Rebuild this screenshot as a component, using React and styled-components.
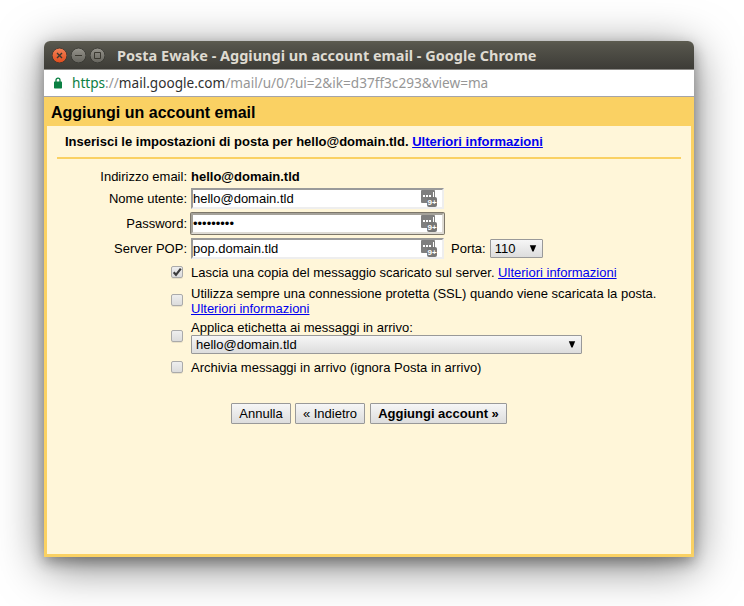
import React from "react";
import styled, { createGlobalStyle, css } from "styled-components";

const GlobalStyle = createGlobalStyle`
  * { box-sizing: border-box; }
  html, body { margin: 0; height: 100%; background: #fff; }
  body { font: 13px/15px "Liberation Sans", Arial, sans-serif; color: #000; overflow: hidden; }
`;

const Desktop = styled.main`
  width: 744px;
  height: 606px;
  padding: 41px 50px 49px 44px;
  overflow: hidden;
  background: #fff;
`;

const Window = styled.section`
  width: 650px;
  height: 516px;
  display: flex;
  flex-direction: column;
  border-radius: 6px 6px 0 0;
  box-shadow: 0 9px 46px rgba(0, 0, 0, 0.52), 0 5px 14px rgba(0, 0, 0, 0.32);
`;

const TitleBar = styled.header`
  height: 29px;
  flex: none;
  display: flex;
  align-items: center;
  padding-left: 8px;
  border-radius: 6px 6px 0 0;
  border-bottom: 1px solid #8d8c88;
  background: linear-gradient(#5d5c50 0, #55544b 4px, #3d3c37 100%);
`;

const Controls = styled.div`
  display: flex;
  gap: 4px;
  svg { display: block; width: 15px; height: 16px; }
`;

const WindowTitle = styled.h1`
  margin: 0 0 0 12px;
  font: bold 14.5px/28px "Noto Sans", sans-serif;
  color: #dfdbd2;
  white-space: nowrap;
  transform: scaleX(0.999);
  transform-origin: left;
`;

const AddressBar = styled.div`
  height: 27px;
  flex: none;
  display: flex;
  align-items: center;
  padding-left: 10px;
  background: #fff;
  border-bottom: 1px solid #a5a4a8;
  svg { display: block; flex: none; }
`;

const Url = styled.div`
  margin-left: 10px;
  padding-bottom: 2px;
  font: 15px/24px "Noto Sans", sans-serif;
  color: #969696;
  white-space: nowrap;
  transform: scaleX(0.906);
  transform-origin: left;
`;
const Scheme = styled.span`color: #0b8043;`;
const Host = styled.span`color: #303030;`;

const Page = styled.div`
  flex: 1;
  display: flex;
  flex-direction: column;
  padding: 0 3px 3px;
  background: #fad163;
`;

const PageTitle = styled.h2`
  margin: 0;
  height: 29px;
  padding: 7px 0 0 4px;
  font-size: 16px;
  line-height: 18px;
`;

const Panel = styled.div`
  flex: 1;
  padding: 8px 10px 0;
  background: #fff6d9;
`;

const Intro = styled.p`
  margin: 0;
  padding: 0 8px 8px;
  font-weight: bold;
  border-bottom: 2px solid #fad163;
`;

const Link = styled.a`
  color: #0000ee;
  text-decoration: underline;
`;

const Form = styled.form`
  padding-top: 10px;
`;

const Row = styled.div`
  display: grid;
  grid-template-columns: 130px auto;
  column-gap: 4px;
  align-items: center;
  justify-content: start;
  height: ${(p) => p.$height}px;
  margin-bottom: ${(p) => p.$gap}px;
  white-space: nowrap;
`;

const Label = styled.label`text-align: right;`;

const Fields = styled.div`
  display: flex;
  align-items: center;
`;

const InputBox = styled.div`
  display: flex;
  align-items: center;
  justify-content: space-between;
  width: 253px;
  height: 21px;
  padding: 0 5px 0 0;
  border: 2px solid;
  border-color: #9a9a9a #eeeeee #eeeeee #9a9a9a;
  background: #fff;
  ${(p) => p.$focused && css`
    border-color: #a5a29a #dedbd4 #dedbd4 #a5a29a;
    box-shadow: 0 0 0 1px #7d776a;
    border-radius: 1px;
  `}
  svg { display: block; flex: none; overflow: visible; }
`;

const TextInput = styled.input`
  width: 200px;
  height: 15px;
  padding: 0;
  border: 0;
  outline: 0;
  background: transparent;
  color: #000;
  font: inherit;
`;

const Port = styled.label`margin: 0 4px 0 7px;`;

const control = css`
  border: 1px solid #999;
  border-radius: 1px;
  background: linear-gradient(#f6f6f6, #dddddd);
  color: #000;
  font: inherit;
`;

const Select = styled.div`
  ${control}
  display: flex;
  align-items: center;
  justify-content: space-between;
  width: ${(p) => p.$width}px;
  height: 19px;
  padding: 0 5px 0 4px;
  svg { display: block; margin-bottom: 1px; }
`;

const CheckCell = styled.span`
  display: flex;
  justify-content: flex-end;
  padding: 0 4px 2px 0;
`;

const Check = styled.span`
  display: block;
  width: 12px;
  height: 12px;
  border: 1px solid #aaa;
  border-radius: 2px;
  background: linear-gradient(#eeeeee, #dcdcdc);
  box-shadow: 0 1px 0 rgba(0, 0, 0, 0.08);
  svg { display: block; overflow: visible; }
`;

const Actions = styled.div`
  display: flex;
  padding-left: 174px;
`;

const Button = styled.button`
  ${control}
  width: ${(p) => p.$width}px;
  height: 21px;
  margin-right: ${(p) => p.$gap || 0}px;
  padding: 0;
  font-weight: ${(p) => (p.$primary ? "bold" : "normal")};
  white-space: nowrap;
`;

const Control = ({ kind }) => (
  <svg viewBox="0 0 15 16">
    <defs>
      <linearGradient id={kind} x2="0" y2="1">
        <stop stopColor={kind === "close" ? "#f58358" : "#96948c"} />
        <stop offset="1" stopColor={kind === "close" ? "#df4b1c" : "#64635c"} />
      </linearGradient>
    </defs>
    <circle cx="7.5" cy="8.5" r="7.4" fill={`url(#${kind})`} stroke="#34332e" strokeWidth=".8" />
    <g fill="none" stroke="#3a3830" strokeWidth="1">
      {kind === "close" && <path d="M5 6l5 5M10 6l-5 5" strokeWidth="1.4" />}
      {kind === "minimize" && <path d="M4 8.5h7" />}
      {kind === "maximize" && <path d="M4.5 5.5h6v6h-6z" />}
    </g>
  </svg>
);

const Lock = () => (
  <svg width="8" height="12" viewBox="0 0 8 12">
    <path d="M2 5V3.2a2 2 0 0 1 4 0V5" fill="none" stroke="#0b8043" strokeWidth="1.3" />
    <rect y="4.5" width="8" height="7" rx=".7" fill="#0b8043" />
  </svg>
);

const BadgeText = styled.text`
  font: bold 8px/8px "Liberation Sans", Arial, sans-serif;
  fill: #fff;
  text-anchor: middle;
`;

const PasswordManagerIcon = () => (
  <svg width="16" height="17" viewBox="0 0 16 17">
    <path d="M1 0h12q1 0 1 1v12H1q-1 0-1-1V1q0-1 1-1z" fill="#7f7f7f" />
    <path d="M2 5h2v2H2zM5 5h2v2H5zM8 5h2v2H8zM12 2h1v5h-1z" fill="#fff" />
    <rect x="6" y="7" width="10" height="10" rx="2" fill="#777" />
    <BadgeText x="11" y="15">9+</BadgeText>
  </svg>
);

const Arrow = () => (
  <svg width="8" height="7" viewBox="0 0 8 7"><path d="M.8 .3h6.4L4.6 6.5H3.4z" /></svg>
);

const Checkbox = ({ checked }) => (
  <Check role="checkbox" aria-checked={!!checked}>
    {checked && (
      <svg width="10" height="10" viewBox="0 0 10 10">
        <path d="M1.7 5.2l2.3 2.6L8.8 1.6" fill="none" stroke="#3c3c3c" strokeWidth="2.2" />
      </svg>
    )}
  </Check>
);

const Field = ({ focused, ...input }) => (
  <InputBox $focused={focused}>
    <TextInput {...input} />
    <PasswordManagerIcon />
  </InputBox>
);

export default function App() {
  return (
    <Desktop>
      <GlobalStyle />
      <Window>
        <TitleBar>
          <Controls>
            <Control kind="close" />
            <Control kind="minimize" />
            <Control kind="maximize" />
          </Controls>
          <WindowTitle>Posta Ewake - Aggiungi un account email - Google Chrome</WindowTitle>
        </TitleBar>
        <AddressBar>
          <Lock />
          <Url><Scheme>https</Scheme>://<Host>mail.google.com</Host>/mail/u/0/?ui=2&amp;ik=d37ff3c293&amp;view=ma</Url>
        </AddressBar>
        <Page>
          <PageTitle>Aggiungi un account email</PageTitle>
          <Panel>
            <Intro>Inserisci le impostazioni di posta per hello@domain.tld. <Link href="#">Ulteriori informazioni</Link></Intro>
            <Form>
              <Row $height={15} $gap={4}><Label>Indirizzo email:</Label><b>hello@domain.tld</b></Row>
              <Row $height={21} $gap={4}><Label>Nome utente:</Label><Field defaultValue="hello@domain.tld" /></Row>
              <Row $height={21} $gap={4}><Label>Password:</Label><Field focused type="password" defaultValue="password1" /></Row>
              <Row $height={21} $gap={6}>
                <Label>Server POP:</Label>
                <Fields>
                  <Field defaultValue="pop.domain.tld" />
                  <Port>Porta:</Port>
                  <Select $width={53}>110<Arrow /></Select>
                </Fields>
              </Row>
              <Row $height={15} $gap={6}>
                <CheckCell><Checkbox checked /></CheckCell>
                <span>Lascia una copia del messaggio scaricato sul server. <Link href="#">Ulteriori informazioni</Link></span>
              </Row>
              <Row $height={30} $gap={4}>
                <CheckCell><Checkbox /></CheckCell>
                <span>Utilizza sempre una connessione protetta (SSL) quando viene scaricata la posta.<br /><Link href="#">Ulteriori informazioni</Link></span>
              </Row>
              <Row $height={34} $gap={6}>
                <CheckCell><Checkbox /></CheckCell>
                <div>Applica etichetta ai messaggi in arrivo:<Select $width={391}>hello@domain.tld<Arrow /></Select></div>
              </Row>
              <Row $height={15} $gap={28}>
                <CheckCell><Checkbox /></CheckCell>
                <span>Archivia messaggi in arrivo (ignora Posta in arrivo)</span>
              </Row>
              <Actions>
                <Button type="button" $width={60} $gap={4}>Annulla</Button>
                <Button type="button" $width={70} $gap={5}>« Indietro</Button>
                <Button type="button" $width={137} $primary>Aggiungi account »</Button>
              </Actions>
            </Form>
          </Panel>
        </Page>
      </Window>
    </Desktop>
  );
}
